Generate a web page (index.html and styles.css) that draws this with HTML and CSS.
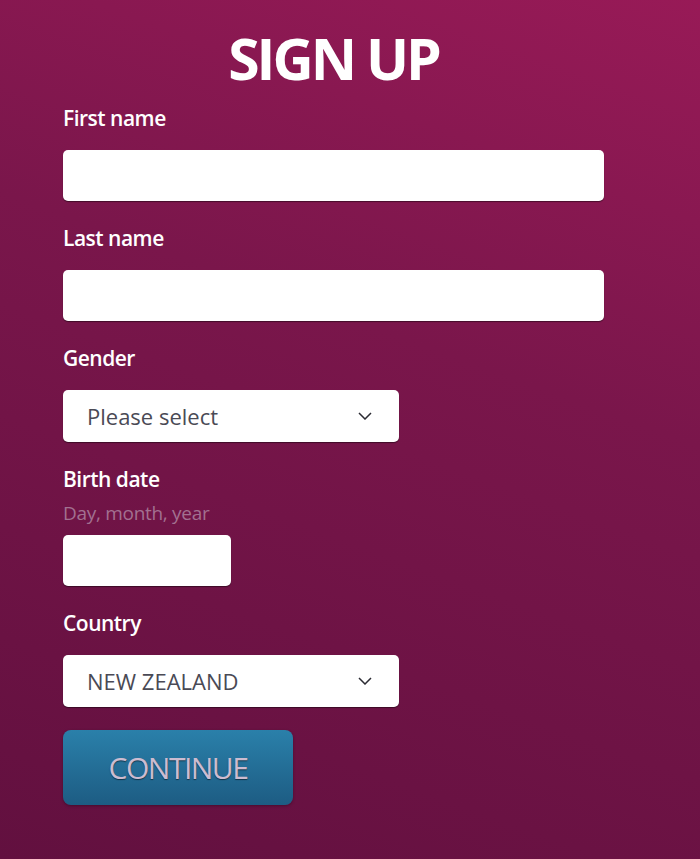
FILE: index.html
```html
<!DOCTYPE html>
<html lang="en">
<head>
    <meta charset="UTF-8">
    <meta name="viewport" content="width=device-width, initial-scale=1.0">
    <title>Sign Up</title>
    <link rel="stylesheet" href="styles.css">
</head>
<body>
    <form class="signup">
        <h1 class="signup-title">SIGN UP</h1>

        <div class="field">
            <label class="field-label" for="firstName">First name</label>
            <input type="text" class="text-input" id="firstName">
        </div>

        <div class="field">
            <label class="field-label" for="lastName">Last name</label>
            <input type="text" class="text-input" id="lastName">
        </div>

        <div class="field">
            <label class="field-label">Gender</label>
            <div class="select-box">
                <span>Please select</span>
                <svg class="chevron" width="14" height="8" viewBox="0 0 14 8">
                    <path d="M1 1 L7 7 L13 1" fill="none" stroke="#2b2b33" stroke-width="1.5"/>
                </svg>
            </div>
        </div>

        <div class="field">
            <label class="field-label" for="birthDate">Birth date</label>
            <p class="field-hint">Day, month, year</p>
            <input type="text" class="text-input date-input" id="birthDate">
        </div>

        <div class="field">
            <label class="field-label">Country</label>
            <div class="select-box">
                <span>NEW ZEALAND</span>
                <svg class="chevron" width="14" height="8" viewBox="0 0 14 8">
                    <path d="M1 1 L7 7 L13 1" fill="none" stroke="#2b2b33" stroke-width="1.5"/>
                </svg>
            </div>
        </div>

        <button type="button" class="continue-btn">CONTINUE</button>
    </form>
</body>
</html>
```

FILE: styles.css
```css
* {
    margin: 0;
    padding: 0;
    box-sizing: border-box;
    font-family: 'Open Sans', 'DejaVu Sans', sans-serif;
}

html, body {
    height: 100%;
}

body {
    background: linear-gradient(200deg, #981a57 0%, #7a164b 40%, #62103f 100%);
    color: white;
}

/* Form */
.signup {
    width: 604px;
    padding: 30px 0 40px 63px;
}

.signup-title {
    text-align: center;
    font-size: 57px;
    font-weight: 700;
    letter-spacing: -3px;
    line-height: 1;
    margin-bottom: 19px;
}

.field {
    margin-bottom: 25px;
}

.field-label {
    display: block;
    font-size: 21px;
    font-weight: 600;
    line-height: 24px;
    letter-spacing: -0.5px;
    margin-bottom: 20px;
}

.field-hint {
    font-size: 19px;
    line-height: 22px;
    color: #a27090;
    letter-spacing: -0.3px;
    margin-top: -9px;
    margin-bottom: 11px;
}

.text-input {
    display: block;
    width: 100%;
    height: 51px;
    border: none;
    border-radius: 5px;
    background: white;
    box-shadow: 0 1px 1px rgba(0, 0, 0, 0.45);
    outline: none;
}

.date-input {
    width: 168px;
}

/* Select */
.select-box {
    width: 336px;
    height: 52px;
    background: white;
    border-radius: 5px;
    box-shadow: 0 1px 1px rgba(0, 0, 0, 0.45);
    display: flex;
    align-items: center;
    justify-content: space-between;
    padding: 0 27px 0 24px;
    color: #4a4a55;
    font-size: 22px;
}

/* Button */
.continue-btn {
    margin-top: -2px;
    width: 230px;
    height: 75px;
    border: none;
    border-radius: 8px;
    background: linear-gradient(#2a80aa, #1d5c83);
    color: #cdbcd0;
    font-size: 30px;
    font-weight: 500;
    letter-spacing: -1.5px;
    text-shadow: 0 1px 1px rgba(0, 0, 0, 0.5);
    box-shadow: 0 1px 3px rgba(0, 0, 0, 0.3);
    cursor: pointer;
}
```
